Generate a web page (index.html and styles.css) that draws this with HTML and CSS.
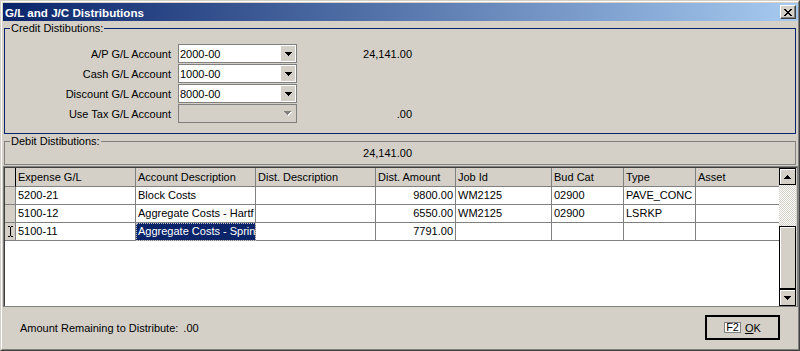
FILE: index.html
```html
<!DOCTYPE html>
<html lang="en">
<head>
    <meta charset="UTF-8">
    <title>G/L and J/C Distributions</title>
    <link rel="stylesheet" href="styles.css">
</head>
<body>
<div class="window">
  <div class="frame">
    <div class="titlebar">
        <span class="title">G/L and J/C Distributions</span>
        <div class="close-btn">
            <svg width="8" height="7" viewBox="0 0 8 7"><path d="M0 0h2v1h1v1h2v-1h1v-1h2v1h-1v1h-1v1h-1v1h1v1h1v1h1v1h-2v-1h-1v-1h-2v1h-1v1h-2v-1h1v-1h1v-1h1v-1h-1v-1h-1v-1h-1z" fill="#000"/></svg>
        </div>
    </div>

    <fieldset class="credit">
        <legend>Credit Distibutions:</legend>
        <div class="acct-row">
            <label>A/P G/L Account</label>
            <div class="combo"><span class="combo-text">2000-00</span><span class="combo-btn"><svg width="7" height="4"><path d="M0 0h7v1h-1v1h-1v1h-1v1h-1v-1h-1v-1h-1v-1h-1z"/></svg></span></div>
            <span class="amount">24,141.00</span>
        </div>
        <div class="acct-row">
            <label>Cash G/L Account</label>
            <div class="combo"><span class="combo-text">1000-00</span><span class="combo-btn"><svg width="7" height="4"><path d="M0 0h7v1h-1v1h-1v1h-1v1h-1v-1h-1v-1h-1v-1h-1z"/></svg></span></div>
            <span class="amount"></span>
        </div>
        <div class="acct-row">
            <label>Discount G/L Account</label>
            <div class="combo"><span class="combo-text">8000-00</span><span class="combo-btn"><svg width="7" height="4"><path d="M0 0h7v1h-1v1h-1v1h-1v1h-1v-1h-1v-1h-1v-1h-1z"/></svg></span></div>
            <span class="amount"></span>
        </div>
        <div class="acct-row">
            <label>Use Tax G/L Account</label>
            <div class="combo disabled"><span class="combo-text"></span><span class="combo-btn"><svg width="8" height="5"><path d="M1 1h7v1h-1v1h-1v1h-1v1h-1v-1h-1v-1h-1v-1h-1z" fill="#fff"/><path d="M0 0h7v1h-1v1h-1v1h-1v1h-1v-1h-1v-1h-1v-1h-1z" fill="#808080"/></svg></span></div>
            <span class="amount">.00</span>
        </div>
    </fieldset>

    <fieldset class="debit">
        <legend>Debit Distibutions:</legend>
        <div class="debit-total">24,141.00</div>
    </fieldset>

    <div class="grid">
        <div class="grid-body">
            <div class="row head">
                <div class="cell ind"></div>
                <div class="cell">Expense G/L</div>
                <div class="cell">Account Description</div>
                <div class="cell">Dist. Description</div>
                <div class="cell">Dist. Amount</div>
                <div class="cell">Job Id</div>
                <div class="cell">Bud Cat</div>
                <div class="cell">Type</div>
                <div class="cell last">Asset</div>
            </div>
            <div class="row">
                <div class="cell ind"></div>
                <div class="cell">5200-21</div>
                <div class="cell">Block Costs</div>
                <div class="cell"></div>
                <div class="cell num">9800.00</div>
                <div class="cell">WM2125</div>
                <div class="cell">02900</div>
                <div class="cell">PAVE_CONC</div>
                <div class="cell last"></div>
            </div>
            <div class="row">
                <div class="cell ind"></div>
                <div class="cell">5100-12</div>
                <div class="cell">Aggregate Costs - Hartf</div>
                <div class="cell"></div>
                <div class="cell num">6550.00</div>
                <div class="cell">WM2125</div>
                <div class="cell">02900</div>
                <div class="cell">LSRKP</div>
                <div class="cell last"></div>
            </div>
            <div class="row">
                <div class="cell ind"><svg width="5" height="11"><path d="M0 0h2v1h-2zM3 0h2v1h-2zM2 1h1v9h-1zM0 10h2v1h-2zM3 10h2v1h-2z"/></svg></div>
                <div class="cell">5100-11</div>
                <div class="cell selected">Aggregate Costs - Sprin</div>
                <div class="cell"></div>
                <div class="cell num">7791.00</div>
                <div class="cell"></div>
                <div class="cell"></div>
                <div class="cell"></div>
                <div class="cell last"></div>
            </div>
        </div>
        <div class="scrollbar">
            <div class="sb-btn"><svg width="7" height="4"><path d="M3 0h1v1h1v1h1v1h1v1h-7v-1h1v-1h1v-1h1z"/></svg></div>
            <div class="sb-track"></div>
            <div class="sb-thumb"></div>
            <div class="sb-btn"><svg width="7" height="4"><path d="M0 0h7v1h-1v1h-1v1h-1v1h-1v-1h-1v-1h-1v-1h-1z"/></svg></div>
        </div>
    </div>

    <div class="footer">
        <div class="remaining">Amount Remaining to Distribute:<span class="rem-val">.00</span></div>
        <div class="ok-btn"><span class="key">F2</span><span class="ok-label"><u>O</u>K</span></div>
    </div>
  </div>
</div>
</body>
</html>
```

FILE: styles.css
```css
* {
    box-sizing: border-box;
}
body {
    margin: 0;
    background: #d4d0c8;
    font-family: "Liberation Sans", Arial, sans-serif;
    font-size: 11px;
    color: #000;
}
.window {
    width: 800px;
    height: 351px;
    border: 1px solid;
    border-color: #d4d0c8 #404040 #404040 #d4d0c8;
}
.frame {
    height: 100%;
    border: 1px solid;
    border-color: #fff #808080 #808080 #fff;
    padding: 1px 0 1px 1px;
    display: flex;
    flex-direction: column;
}
.titlebar {
    height: 18px;
    flex: none;
    display: flex;
    align-items: center;
    justify-content: space-between;
    padding: 0 2px 0 2px;
    background: linear-gradient(to right, #0a246a, #a6caf0);
}
.title {
    color: #fff;
    font-weight: bold;
    font-size: 11.6px;
}
.close-btn {
    width: 16px;
    height: 14px;
    background: #d4d0c8;
    border: 1px solid;
    border-color: #fff #404040 #404040 #fff;
    box-shadow: inset -1px -1px #808080;
    display: flex;
    align-items: center;
    justify-content: center;
    padding-right: 1px;
}
.close-btn svg {
    display: block;
}

fieldset {
    margin: 1px 2px 0 1px;
    padding: 0;
    min-width: 0;
}
legend {
    padding: 0 1px;
    margin-left: 5px;
    line-height: 13px;
}
.credit {
    border: 1px solid #0a246a;
    padding: 9px 0 9px 0;
}
.acct-row {
    display: flex;
    align-items: center;
    height: 20px;
}
.acct-row label {
    width: 166px;
    text-align: right;
}
.combo {
    width: 119px;
    height: 19px;
    margin-left: 7px;
    margin-bottom: 1px;
    border: 1px solid #808080;
    background: #fff;
    display: flex;
    align-items: center;
}
.combo-text {
    flex: 1;
    padding-left: 1px;
}
.combo-btn {
    width: 14px;
    height: 15px;
    margin-right: 1px;
    background: #d4d0c8;
    display: flex;
    align-items: center;
    justify-content: center;
}
.combo-btn svg {
    display: block;
}
.combo.disabled {
    background: #d4d0c8;
}
.amount {
    width: 115px;
    text-align: right;
}

.debit {
    border: 1px solid #808080;
    padding: 0 0 5px 0;
}
.debit-total {
    width: 407px;
    text-align: right;
    line-height: 12px;
    margin-top: -1px;
}

.grid {
    margin-top: 1px;
    height: 141px;
    flex: none;
    display: flex;
    border: 1px solid #808080;
    box-shadow: inset 1px 1px #404040;
    padding: 1px 1px 0 1px;
}
.grid-body {
    width: 774px;
    background: #fff;
}
.row {
    display: grid;
    grid-template-columns: 11px 120px 120px 120px 80px 96px 72px 72px 83px;
    height: 18px;
}
.cell {
    border-right: 1px solid #808080;
    border-bottom: 1px solid #808080;
    padding-left: 2px;
    line-height: 17px;
    white-space: nowrap;
    overflow: hidden;
}
.cell.last {
    border-right: none;
}
.row.head {
    height: 19px;
    background: #d4d0c8;
}
.row.head .cell {
    line-height: 18px;
}
.row.head .ind {
    border-right-color: #000;
}
.ind {
    background: #d4d0c8;
    padding: 0;
    display: flex;
    align-items: center;
    justify-content: center;
}
.ind svg {
    display: block;
}
.num {
    text-align: right;
    padding-right: 2px;
}
.selected {
    background: #0a246a;
    color: #fff;
    outline: 1px dotted #c8c8c8;
    outline-offset: -1px;
}

.scrollbar {
    width: 17px;
    display: flex;
    flex-direction: column;
}
.sb-btn {
    height: 17px;
    border: 1px solid #000;
    box-shadow: inset 1px 1px #fff;
    background: #d4d0c8;
    display: flex;
    align-items: center;
    justify-content: center;
}
.sb-btn svg {
    display: block;
}
.sb-track {
    height: 41px;
    background-image: conic-gradient(#fff 25%, #d4d0c8 0 50%, #fff 0 75%, #d4d0c8 0);
    background-size: 2px 2px;
}
.sb-thumb {
    height: 63px;
    border: 1px solid #000;
    box-shadow: inset 1px 1px #fff;
    background: #d4d0c8;
}

.footer {
    flex: 1;
    display: flex;
    align-items: center;
    justify-content: space-between;
    padding: 0 18px 0 17px;
}
.rem-val {
    margin-left: 5px;
}
.ok-btn {
    width: 75px;
    height: 25px;
    border: 2px solid #000;
    display: flex;
    align-items: center;
    justify-content: center;
}
.key {
    background: #fff;
    border: 1px solid #808080;
    line-height: 9px;
    padding: 0 1px;
}
.ok-label {
    margin-left: 4px;
}
```
